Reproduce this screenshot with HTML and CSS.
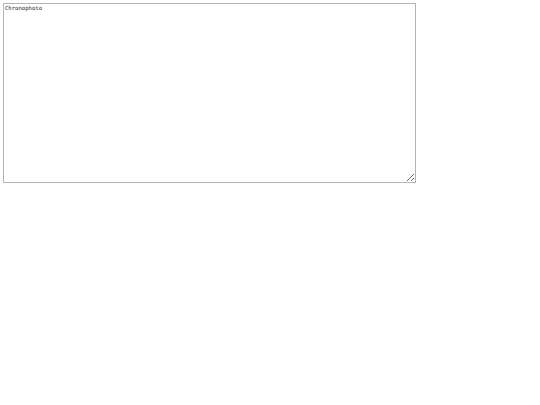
FILE: index.html
```html
<!DOCTYPE html>
<html>
<head>
<meta charset="utf-8">
<link rel="stylesheet" href="styles.css">
</head>
<body>
<textarea class="editor">Chronophoto</textarea>
</body>
</html>
```
FILE: styles.css
```css
html, body {
  margin: 0;
  padding: 0;
  background: #fff;
}
body {
  padding: 3px;
}
.editor {
  display: block;
  box-sizing: border-box;
  width: 413px;
  height: 180px;
  margin: 0;
  padding: 0 1px;
  border: 1px solid #b4b4b4;
  font-family: "DejaVu Sans Mono", monospace;
  font-size: 5.6px;
  line-height: 8px;
  color: #222;
  background: #fff;
}
```
